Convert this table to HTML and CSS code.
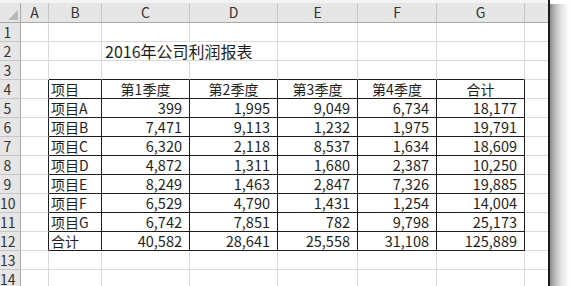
FILE: index.html
```html
<!DOCTYPE html>
<html lang="zh-CN">
<head>
<meta charset="utf-8">
<title>2016年公司利润报表</title>
<link rel="stylesheet" href="styles.css">
</head>
<body>
<div class="window">
  <div class="sheet-wrap">
    <div class="topstrip"></div>
    <div class="sheet">
      <div class="corner"><svg width="10" height="10" viewBox="0 0 10 10"><polygon points="10,0 10,10 0,10" fill="#b9b9b9"/></svg></div>
      <div class="ch">A</div><div class="ch">B</div><div class="ch">C</div><div class="ch">D</div><div class="ch">E</div><div class="ch">F</div><div class="ch">G</div><div class="ch last"></div>

      <div class="rh">1</div><div class="c"></div><div class="c"></div><div class="c"></div><div class="c"></div><div class="c"></div><div class="c"></div><div class="c"></div><div class="c last"></div>

      <div class="rh">2</div><div class="c"></div><div class="c"></div><div class="c title span2">2016年公司利润报表</div><div class="c"></div><div class="c"></div><div class="c"></div><div class="c last"></div>

      <div class="rh">3</div><div class="c"></div><div class="c tt"></div><div class="c tt"></div><div class="c tt"></div><div class="c tt"></div><div class="c tt"></div><div class="c tt"></div><div class="c last"></div>

      <div class="rh">4</div><div class="c tl"></div><div class="c t">项目</div><div class="c t ctr">第1季度</div><div class="c t ctr">第2季度</div><div class="c t ctr">第3季度</div><div class="c t ctr">第4季度</div><div class="c t ctr">合计</div><div class="c last"></div>

      <div class="rh">5</div><div class="c tl"></div><div class="c t">项目A</div><div class="c t n">399</div><div class="c t n">1,995</div><div class="c t n">9,049</div><div class="c t n">6,734</div><div class="c t n">18,177</div><div class="c last"></div>

      <div class="rh">6</div><div class="c tl"></div><div class="c t">项目B</div><div class="c t n">7,471</div><div class="c t n">9,113</div><div class="c t n">1,232</div><div class="c t n">1,975</div><div class="c t n">19,791</div><div class="c last"></div>

      <div class="rh">7</div><div class="c tl"></div><div class="c t">项目C</div><div class="c t n">6,320</div><div class="c t n">2,118</div><div class="c t n">8,537</div><div class="c t n">1,634</div><div class="c t n">18,609</div><div class="c last"></div>

      <div class="rh">8</div><div class="c tl"></div><div class="c t">项目D</div><div class="c t n">4,872</div><div class="c t n">1,311</div><div class="c t n">1,680</div><div class="c t n">2,387</div><div class="c t n">10,250</div><div class="c last"></div>

      <div class="rh">9</div><div class="c tl"></div><div class="c t">项目E</div><div class="c t n">8,249</div><div class="c t n">1,463</div><div class="c t n">2,847</div><div class="c t n">7,326</div><div class="c t n">19,885</div><div class="c last"></div>

      <div class="rh">10</div><div class="c tl"></div><div class="c t">项目F</div><div class="c t n">6,529</div><div class="c t n">4,790</div><div class="c t n">1,431</div><div class="c t n">1,254</div><div class="c t n">14,004</div><div class="c last"></div>

      <div class="rh">11</div><div class="c tl"></div><div class="c t">项目G</div><div class="c t n">6,742</div><div class="c t n">7,851</div><div class="c t n">782</div><div class="c t n">9,798</div><div class="c t n">25,173</div><div class="c last"></div>

      <div class="rh">12</div><div class="c tl"></div><div class="c t">合计</div><div class="c t n">40,582</div><div class="c t n">28,641</div><div class="c t n">25,558</div><div class="c t n">31,108</div><div class="c t n">125,889</div><div class="c last"></div>

      <div class="rh">13</div><div class="c"></div><div class="c"></div><div class="c"></div><div class="c"></div><div class="c"></div><div class="c"></div><div class="c"></div><div class="c last"></div>

      <div class="rh">14</div><div class="c"></div><div class="c"></div><div class="c"></div><div class="c"></div><div class="c"></div><div class="c"></div><div class="c"></div><div class="c last"></div>
    </div>
  </div>
  <div class="shadow"></div>
</div>
</body>
</html>
```

FILE: styles.css
```css
html, body {
  margin: 0;
  padding: 0;
  background: #ffffff;
}

body {
  width: 571px;
  height: 286px;
  overflow: hidden;
  font-family: "Noto Sans CJK SC", "Noto Sans", sans-serif;
  color: #1e1e1e;
}

.window {
  display: flex;
  height: 286px;
}

.sheet-wrap {
  width: 548px;
  border-right: 2px solid #1c1c1c;
  overflow: hidden;
  display: flex;
  flex-direction: column;
}

.topstrip {
  height: 3px;
  background: #f3f3f3;
  flex: none;
}

.sheet {
  display: grid;
  grid-template-columns: 21px 28px 53px 88px 88px 80px 79px 88px 23px;
  grid-template-rows: 20px repeat(14, 19px);
}

.corner {
  background: #e6e6e6;
  border-right: 1px solid #a9a9a9;
  border-bottom: 1px solid #a9a9a9;
  box-sizing: border-box;
  display: flex;
  align-items: flex-end;
  justify-content: flex-end;
  padding: 0 2px 2px 0;
}

.corner svg {
  display: block;
}

.ch {
  background: #e6e6e6;
  border-right: 1px solid #c6c6c6;
  border-bottom: 1px solid #a9a9a9;
  box-sizing: border-box;
  font-size: 14px;
  line-height: 19px;
  text-align: center;
  color: #333333;
}

.ch.last {
  border-right: none;
}

.rh {
  background: #e6e6e6;
  border-right: 1px solid #a9a9a9;
  border-bottom: 1px solid #c6c6c6;
  box-sizing: border-box;
  font-size: 14px;
  line-height: 18px;
  text-align: center;
  padding-right: 5px;
  color: #333333;
}

.c {
  border-right: 1px solid #dadada;
  border-bottom: 1px solid #dadada;
  box-sizing: border-box;
  font-size: 14px;
  line-height: 18px;
  padding: 0 2px;
  white-space: nowrap;
  min-width: 0;
}

.c.last {
  border-right: none;
}

.title {
  grid-column: span 2;
  font-size: 16px;
  padding-left: 3px;
}

.tt {
  border-bottom-color: #1e1e1e;
}

.tl {
  border-right-color: #1e1e1e;
}

.t {
  border-right-color: #1e1e1e;
  border-bottom-color: #1e1e1e;
}

.ctr {
  text-align: center;
}

.n {
  text-align: right;
  padding-right: 7px;
  font-size: 14.5px;
}

.shadow {
  flex: 1;
  margin-top: 4px;
  background: linear-gradient(to right, #8c8c8c 0%, #bdbdbd 25%, #e4e4e4 55%, #fafafa 85%, #ffffff 100%);
}
```
